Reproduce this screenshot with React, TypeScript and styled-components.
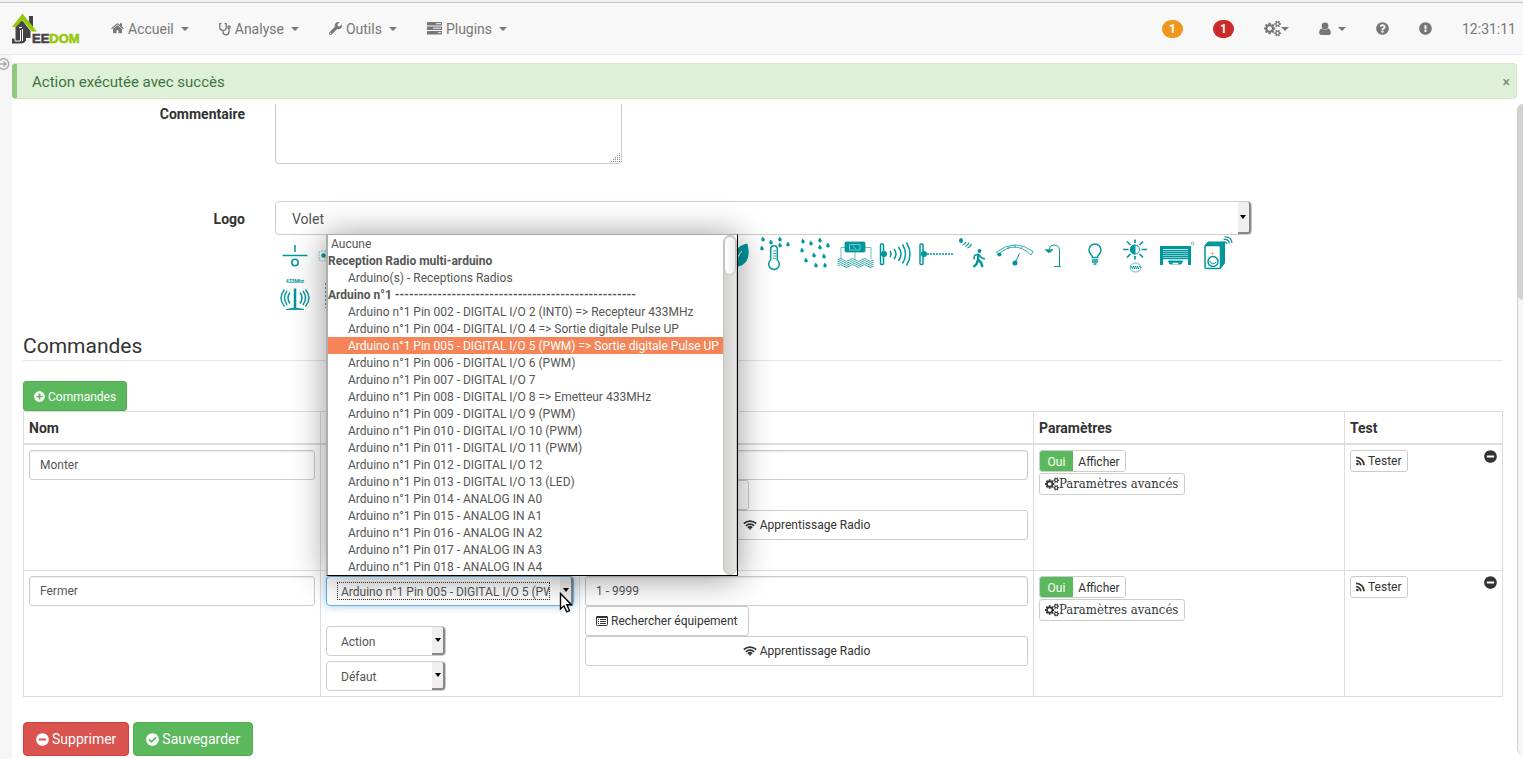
import React from 'react';
import styled, { createGlobalStyle, css } from 'styled-components';
import {
  FaCheckCircle,
  FaExclamationCircle,
  FaMinusCircle,
  FaPlusCircle,
  FaQuestionCircle,
  FaWrench,
} from 'react-icons/fa';

const TEAL = '#00979c';

const GlobalStyle = createGlobalStyle`
  *, *::before, *::after { box-sizing: border-box; }
  body {
    margin: 0;
    background: #fff;
    color: #333;
    font: 14px/20px Roboto, "Liberation Sans", sans-serif;
    overflow: hidden;
  }
  button, input, select, textarea { font-family: inherit; margin: 0; }
  svg { flex: none; }
`;

/* ---------- page frame ---------- */

const Page = styled.div`
  display: flex;
  flex-direction: column;
  min-height: 100vh;
`;

const TopEdge = styled.div`
  height: 3px;
  background: #f2f1f0;
  border-bottom: 1px solid #c6c4c2;
`;

const Navbar = styled.nav`
  display: flex;
  align-items: center;
  justify-content: space-between;
  height: 52px;
  padding: 0 7px 0 12px;
  background: #f8f8f8;
  border-bottom: 1px solid #e7e7e7;
`;

const NavGroup = styled.div`
  display: flex;
  align-items: center;
  gap: 30px;
`;

const NavLink = styled.a<{ $tight?: boolean }>`
  display: flex;
  align-items: center;
  gap: ${(p) => (p.$tight ? 0 : 4)}px;
  color: #777;
  font-size: 14px;
  text-decoration: none;
`;

const Caret = styled.span<{ $near?: boolean }>`
  margin-left: ${(p) => (p.$near ? 0 : 3)}px;
  border: 4px solid transparent;
  border-top-color: currentColor;
  border-bottom: 0;
`;

const Badge = styled.span<{ $color: string }>`
  width: 21px;
  height: 18px;
  border-radius: 9px;
  background: ${(p) => p.$color};
  color: #fff;
  font-size: 12px;
  font-weight: 700;
  line-height: 18px;
  text-align: center;
`;

const Clock = styled.time`
  color: #777;
  font-size: 14px;
`;

const LogoLink = styled.a`
  display: block;
  height: 32px;
`;

const Body = styled.div`
  display: flex;
  flex: 1;
`;

const SideStrip = styled.aside`
  width: 12px;
  flex: none;
  padding-top: 2px;
  background: #f5f5f5;
  overflow: hidden;
`;

const SideToggle = styled.button`
  display: flex;
  justify-content: flex-end;
  width: 10px;
  height: 14px;
  padding: 0;
  border: 0;
  background: none;
  overflow: hidden;
`;

const Main = styled.main`
  flex: 1;
  min-width: 0;
  padding-top: 8px;
`;

const Alert = styled.div`
  display: flex;
  align-items: center;
  justify-content: space-between;
  height: 36px;
  margin: 0 6px 5px 0;
  padding: 2px 6px 0 15px;
  border: 1px solid #d6e9c6;
  border-left: 5px solid #93c77f;
  border-radius: 4px;
  background: #dff0d8;
  color: #3c763d;
  font-size: 15px;
`;

const CloseButton = styled.button`
  padding: 0;
  border: 0;
  background: none;
  color: #72806f;
  font-size: 14px;
  line-height: 16px;
`;

const Scroller = styled.div`
  display: flex;
  justify-content: space-between;
`;

const Content = styled.div`
  flex: 1;
  min-width: 0;
  padding: 0 14px 0 11px;
`;

const ScrollTrack = styled.div`
  width: 6px;
  margin-bottom: 4px;
  border-left: 1px solid #cfcecd;
  border-radius: 6px 0 0 6px;
  background: #f5f5f4;
`;

const ScrollThumb = styled.div`
  height: 196px;
  border-radius: 6px 0 0 6px;
  background: #d3d2d1;
`;

/* ---------- form ---------- */

const FormRow = styled.div<{ $gap: number }>`
  display: flex;
  gap: 30px;
  margin-bottom: ${(p) => p.$gap}px;
`;

const Label = styled.label<{ $top?: number }>`
  width: 15%;
  padding-top: ${(p) => p.$top ?? 0}px;
  font-size: 14px;
  font-weight: 700;
  text-align: right;
`;

const CommentBox = styled.div`
  position: relative;
  width: 24%;
  max-width: 347px;
`;

const Comment = styled.textarea`
  display: block;
  width: 100%;
  height: 60px;
  padding: 6px 12px;
  border: 1px solid #ccc;
  border-top: 0;
  border-radius: 0 0 4px 4px;
  background: #fff;
  resize: none;
`;

const Grip = styled.svg`
  position: absolute;
  right: 0;
  bottom: 0;
  pointer-events: none;
`;

const LogoField = styled.div`
  width: 66%;
`;

const SelectBox = styled.div<{ $width: string; $height: number; $focus?: boolean }>`
  position: relative;
  width: ${(p) => p.$width};
  height: ${(p) => p.$height}px;
  border: 1px solid ${(p) => (p.$focus ? '#66afe9' : '#ccc')};
  border-radius: 4px;
  background: #fff;
  ${(p) => p.$focus && css`box-shadow: 0 0 8px rgba(102, 175, 233, 0.6);`}
`;

const Select = styled.select<{ $large?: boolean }>`
  display: block;
  width: 100%;
  height: 100%;
  padding: 2px 24px 0 ${(p) => (p.$large ? 16 : 14)}px;
  border: 0;
  outline: 0;
  appearance: none;
  background: none;
  color: #555;
  font-size: ${(p) => (p.$large ? 14 : 12)}px;
`;

const Arrow = styled.span`
  position: absolute;
  top: 0;
  right: 0;
  bottom: 0;
  display: flex;
  align-items: center;
  justify-content: center;
  width: 13px;
  border-right: 2px solid #888;
  border-bottom: 2px solid #888;
  border-radius: 0 3px 3px 0;
  background: #f0efed;
  pointer-events: none;

  &::after {
    content: '';
    border: 3px solid transparent;
    border-top: 4px solid #000;
    border-bottom: 0;
  }
`;

const FocusRing = styled.span`
  position: absolute;
  inset: 5px 23px 5px 10px;
  border: 1px dotted #333;
  pointer-events: none;
`;

const IconGrid = styled.div`
  display: flex;
  flex-wrap: wrap;
  height: 80px;
`;

/* ---------- commands ---------- */

const Legend = styled.h2`
  height: 46px;
  margin: 0 0 20px;
  padding-top: 18px;
  border-bottom: 1px solid #e5e5e5;
  font-size: 21px;
  font-weight: 400;
  line-height: 26px;
`;

const tones = {
  success: css`background: #5cb85c; border-color: #4cae4c; color: #fff;`,
  danger: css`background: #d9534f; border-color: #d43f3a; color: #fff;`,
  plain: css`background: #fff; border-color: #ccc; color: #333;`,
};

const sizes = {
  xs: css`height: 22px; padding: 1px 5px 0; font-size: 12px; border-radius: 3px;`,
  sm: css`height: 30px; padding: 1px 10px 0; font-size: 12px; border-radius: 3px;`,
  md: css`height: 34px; padding: 1px 12px 0; font-size: 14px; border-radius: 4px;`,
};

const Button = styled.button<{
  $tone: keyof typeof tones;
  $size: keyof typeof sizes;
  $block?: boolean;
  $serif?: boolean;
}>`
  display: flex;
  align-items: center;
  justify-content: center;
  gap: ${(p) => (p.$serif ? 0 : 3)}px;
  width: ${(p) => (p.$block ? '100%' : 'auto')};
  border: 1px solid;
  white-space: nowrap;
  ${(p) => tones[p.$tone]}
  ${(p) => sizes[p.$size]}
  ${(p) => p.$serif && css`
    padding: 0 6px 0 5px;
    font-family: "DejaVu Serif Condensed", "DejaVu Serif", serif;
    font-size: 13px;
    font-stretch: condensed;
  `}
`;

const Table = styled.table`
  width: 100%;
  table-layout: fixed;
  border-collapse: collapse;
`;

const Th = styled.th<{ $width?: string }>`
  width: ${(p) => p.$width ?? 'auto'};
  height: 32px;
  padding: 2px 5px 0;
  border: 1px solid #ddd;
  border-bottom-width: 2px;
  font-size: 14px;
  font-weight: 700;
  text-align: left;
`;

const Td = styled.td`
  height: 126px;
  padding: 5px;
  border: 1px solid #ddd;
  vertical-align: top;
`;

const TextInput = styled.input`
  display: block;
  width: 100%;
  height: 30px;
  padding: 0 10px;
  border: 1px solid #ccc;
  border-radius: 3px;
  background: #fff;
  box-shadow: inset 0 1px 1px rgba(0, 0, 0, 0.08);
  color: #555;
  font-size: 12px;
`;

const Stack = styled.div<{ $gap?: number }>`
  display: flex;
  flex-direction: column;
  align-items: flex-start;
  gap: ${(p) => p.$gap ?? 0}px;
`;

const Toggle = styled.div`
  display: flex;
  height: 22px;
  margin-bottom: 1px;
  border: 1px solid #ccc;
  border-radius: 3px;
  overflow: hidden;
`;

const ToggleOn = styled.button`
  width: 33px;
  padding: 2px 0 0;
  border: 0;
  background: #5cb85c;
  color: #fff;
  font-size: 12px;
`;

const ToggleName = styled.button`
  width: 52px;
  padding: 2px 0 0;
  border: 0;
  background: #fff;
  color: #333;
  font-size: 12px;
`;

const TestCell = styled.div`
  display: flex;
  align-items: flex-start;
  justify-content: space-between;
`;

const RemoveButton = styled.button`
  padding: 0;
  border: 0;
  background: none;
  color: #333;
  line-height: 0;
`;

const Actions = styled.div`
  display: flex;
  gap: 4px;
  margin-top: 25px;
  padding-bottom: 3px;
`;

/* ---------- drop-down list ---------- */

const Popup = styled.div`
  position: absolute;
  z-index: 5;
  bottom: calc(100% + 1px);
  left: -1px;
  display: flex;
  width: 412px;
  border: 1px solid #000;
  border-top-color: #aaa;
  border-left: 2px solid #adadad;
  background: #fff;
  box-shadow: 0 2px 32px rgba(0, 0, 0, 0.42);
`;

const OptionList = styled.ul`
  flex: 1;
  min-width: 0;
  margin: 0;
  padding: 0;
  list-style: none;
  overflow: hidden;
`;

const Option = styled.li<{ $kind: 'none' | 'group' | 'item'; $active?: boolean }>`
  height: 17px;
  padding-top: 1px;
  padding-left: ${(p) => ({ none: 3, group: 0, item: 20 })[p.$kind]}px;
  background: ${(p) => (p.$active ? '#f58559' : 'none')};
  color: ${(p) => (p.$active ? '#fff' : '#555')};
  font-size: 12px;
  font-weight: ${(p) => (p.$kind === 'group' ? 700 : 400)};
  line-height: 16px;
  white-space: nowrap;
`;

const PopupTrack = styled.div`
  width: 14px;
  border: 1px solid #c4c3c2;
  border-radius: 7px;
  background: linear-gradient(90deg, #d2d2d1, #e6e6e5);
`;

const PopupThumb = styled.div`
  height: 39px;
  border: 1px solid #c4c3c2;
  border-radius: 7px;
  background: linear-gradient(90deg, #fff, #ededec);
`;

const Pointer = styled.svg`
  position: absolute;
  z-index: 6;
  top: 15px;
  left: 232px;
`;

/* ---------- glyphs ---------- */

const GLYPHS = {
  home: 'M1472 992v480q0 26-19 45t-45 19h-384v-384h-256v384h-384q-26 0-45-19t-19-45v-480q0-1 .5-3t.5-3l575-474 575 474q1 2 1 6zm223-69l-62 74q-8 9-21 11h-3q-13 0-21-7l-692-577-692 577q-12 8-24 7-13-2-21-11l-62-74q-8-10-7-23.5t11-21.5l719-599q32-26 76-26t76 26l244 204v-195q0-14 9-23t23-9h192q14 0 23 9t9 23v408l219 182q10 8 11 21.5t-7 23.5z',
  cogs: 'M896 896q0-106-75-181t-181-75-181 75-75 181 75 181 181 75 181-75 75-181zm768 512q0-52-38-90t-90-38-90 38-38 90q0 53 37.5 90.5t90.5 37.5 90.5-37.5 37.5-90.5zm0-1024q0-52-38-90t-90-38-90 38-38 90q0 53 37.5 90.5t90.5 37.5 90.5-37.5 37.5-90.5zm-384 421v185q0 10-7 19.5t-16 10.5l-155 24q-11 35-32 76 34 48 90 115 7 11 7 20 0 12-7 19-23 30-82.5 89.5t-78.5 59.5q-11 0-21-7l-115-90q-37 19-77 31-11 108-23 155-7 24-30 24h-186q-11 0-20-7.5t-10-17.5l-23-153q-34-10-75-31l-118 89q-7 7-20 7-11 0-21-8-144-133-144-160 0-9 7-19 10-14 41-53t47-61q-23-44-35-82l-152-24q-10-1-17-9.5t-7-19.5v-185q0-10 7-19.5t16-10.5l155-24q11-35 32-76-34-48-90-115-7-11-7-20 0-12 7-20 22-30 82-89t79-59q11 0 21 7l115 90q34-18 77-32 11-108 23-154 7-24 30-24h186q11 0 20 7.5t10 17.5l23 153q34 10 75 31l118-89q8-7 20-7 11 0 21 8 144 133 144 160 0 8-7 19-12 16-42 54t-45 60q23 48 34 82l152 23q10 2 17 10.5t7 19.5zm640 533v140q0 16-149 31-12 27-30 52 51 113 51 138 0 4-4 7-122 71-124 71-8 0-46-47t-52-68q-20 2-30 2t-30-2q-14 21-52 68t-46 47q-2 0-124-71-4-3-4-7 0-25 51-138-18-25-30-52-149-15-149-31v-140q0-16 149-31 13-29 30-52-51-113-51-138 0-4 4-7 4-2 35-20t59-34 30-16q8 0 46 46.5t52 67.5q20-2 30-2t30 2q51-71 92-112l6-2q4 0 124 70 4 3 4 7 0 25-51 138 17 23 30 52 149 15 149 31zm0-1024v140q0 16-149 31-12 27-30 52 51 113 51 138 0 4-4 7-122 71-124 71-8 0-46-47t-52-68q-20 2-30 2t-30-2q-14 21-52 68t-46 47q-2 0-124-71-4-3-4-7 0-25 51-138-18-25-30-52-149-15-149-31v-140q0-16 149-31 13-29 30-52-51-113-51-138 0-4 4-7 4-2 35-20t59-34 30-16q8 0 46 46.5t52 67.5q20-2 30-2t30 2q51-71 92-112l6-2q4 0 124 70 4 3 4 7 0 25-51 138 17 23 30 52 149 15 149 31z',
};

const HomeIcon = () => (
  <svg width="13" height="15" viewBox="64 100 1664 1664" fill="currentColor" aria-hidden="true">
    <path d={GLYPHS.home} />
  </svg>
);

const CogsIcon = ({ size }: { size: number }) => (
  <svg width={size} height={size} viewBox="0 0 1920 1792" fill="currentColor" aria-hidden="true">
    <path d={GLYPHS.cogs} />
  </svg>
);

const StethoscopeIcon = () => (
  <svg width="12" height="14" viewBox="0 0 12 14" fill="none" stroke="currentColor" strokeWidth="1.3" aria-hidden="true">
    <path d="M2.4 1.6H.8v3.6a3.2 3.2 0 0 0 6.4 0V1.6H5.6M4 8.4v1.4a3 3 0 0 0 6 0V6.6" />
    <circle cx="10" cy="5.2" r="1.2" />
  </svg>
);

const TasksIcon = () => (
  <svg width="15" height="13" viewBox="0 0 15 13" aria-hidden="true">
    <g fill="currentColor">
      <rect y="0" width="15" height="3.500" rx=".5" />
      <rect y="4.500" width="15" height="3.500" rx=".5" />
      <rect y="9" width="15" height="3.500" rx=".5" />
    </g>
    <path d="M9 1.700h5M6 6.200h8M11 10.700h3" stroke="#f8f8f8" strokeWidth="1" />
  </svg>
);

const UserIcon = () => (
  <svg width="12" height="14" viewBox="0 0 12 14" fill="currentColor" aria-hidden="true">
    <circle cx="6" cy="4" r="3.400" />
    <path d="M3 6.400C.8 6.600.2 8.800.2 11c0 1.300.9 2 2 2h7.600c1.100 0 2-.7 2-2 0-2.200-.6-4.400-2.800-4.600a4.200 4.200 0 0 1-6 0z" />
  </svg>
);

const ListIcon = () => (
  <svg width="12" height="12" viewBox="0 0 12 12" aria-hidden="true">
    <rect x=".5" y="1.5" width="11" height="9" rx="1" fill="none" stroke="currentColor" />
    <path d="M.5 2h11" stroke="currentColor" strokeWidth="2" />
    <path d="M2 4.500h1M4 4.500h6M2 6.500h1M4 6.500h6M2 8.500h1M4 8.500h6" stroke="currentColor" />
  </svg>
);

const WifiIcon = () => (
  <svg width="14" height="12" viewBox="0 0 14 12" fill="none" stroke="currentColor" strokeWidth="1.700" aria-hidden="true">
    <path d="M.8 4.600a8.800 8.800 0 0 1 12.400 0M2.900 6.800a5.800 5.800 0 0 1 8.200 0M4.900 8.800a3 3 0 0 1 4.200 0" />
    <path d="M5.800 9.700a1.700 1.700 0 0 1 2.400 0L7 11z" fill="currentColor" stroke="none" />
  </svg>
);

const RssIcon = () => (
  <svg width="9" height="10" viewBox="0 0 9 10" fill="none" stroke="currentColor" strokeWidth="1.700" aria-hidden="true">
    <path d="M.2 1.400a7.800 7.800 0 0 1 7.800 7.800M.2 4.700a4.500 4.500 0 0 1 4.500 4.500" />
    <circle cx="1.400" cy="8" r="1.300" fill="currentColor" stroke="none" />
  </svg>
);

const JeedomLogo = () => (
  <svg width="69" height="32" viewBox="0 0 69 32" role="img" aria-label="Jeedom">
    <path d="M17 3h4v12h-4z" fill="#434247" />
    <path d="M3 13.500 10 7l8.500 11v7H14v3H9V16z" fill="#434247" />
    <path d="M3.500 13h10v13c0 4-2.500 4.500-5.500 4.500H0V25.500h3.500z" fill="#434247" />
    <path d="M3 25v3h5.500v-11M10.500 28V16" fill="none" stroke="#f8f8f8" strokeWidth="1" />
    <path d="M0 14 10.500.5 25 18.500h-5.500l-9-11.500L4 14z" fill="#96c80c" />
    <path d="M7 14.500h3" stroke="#f8f8f8" strokeWidth="1.200" />
    <text x="20" y="30" fontFamily="'Liberation Sans', Arial, sans-serif" fontWeight="700" fontSize="13" strokeWidth=".6">
      <tspan fill="#434247" stroke="#434247">EE</tspan>
      <tspan fill="#96c80c" stroke="#96c80c">DOM</tspan>
    </text>
  </svg>
);

const Drops = ({ at }: { at: number[][] }) => (
  <g fill={TEAL} stroke="none">
    {at.map(([x, y]) => (
      <path key={`${x}-${y}`} d={`M${x - 0.5} ${y - 2.4}c1.200 1.500 2.300 2.300 2.300 3.200a1.700 1.700 0 0 1-3.500 0c0-1 .8-1.500 1.200-3.200z`} />
    ))}
  </g>
);

const DEVICES: Record<string, React.ReactNode> = {
  switch: (
    <g strokeWidth="1.500">
      <path d="M20 10v7M7.500 20.500h25" />
      <circle cx="20" cy="27.500" r="3.200" />
    </g>
  ),
  camera: (
    <g>
      <path d="M8 15.500 4 17v8l4 1.500M10 15.500h14v11H10z" strokeWidth=".5" strokeDasharray="2 1" />
      <circle cx="8.500" cy="20.500" r="1.800" fill={TEAL} />
    </g>
  ),
  leaf: (
    <g>
      <path d="M32 9c-10 3-16 8-13 22 10 1 17-6 13-22z" fill={TEAL} />
      <path d="M27 16c-3 3-5 7-6 13" stroke="#fff" />
    </g>
  ),
  thermometer: (
    <g>
      <path d="M15.700 25V14a3.300 3.300 0 0 1 6.600 0v11a5.300 5.300 0 1 1-6.600 0z" strokeWidth="1.500" />
      <path d="M18 16h3M18 18.500h3M18 21h3M18 23.500h3" strokeWidth=".8" />
      <Drops at={[[8, 4], [16, 7], [25, 4], [25, 10], [33, 9], [7, 13]]} />
    </g>
  ),
  rain: (
    <Drops at={[[8, 6], [16, 8], [25, 5], [33, 10], [7, 15], [25, 12], [19, 20], [29, 21], [11, 25], [21, 30], [30, 30]]} />
  ),
  water: (
    <g strokeWidth=".8">
      <rect x="10" y="7" width="20" height="10" rx="1" fill={TEAL} />
      <path d="M14.500 9.500h10.500v5.500H14.500zM18 11l3 3" stroke="#a5dcdd" strokeWidth=".7" />
      <path d="M10 12.500H6V24M30 12.500h6V24M20 17v8" strokeWidth=".6" />
      {[25, 27, 29, 31].map((y) => (
        <path key={y} d={`M2.500 ${y}q3-3 6 0t6 0 6 0 6 0 6 0 6 0`} />
      ))}
    </g>
  ),
  motion: (
    <g strokeWidth="1.500">
      <rect x="5.500" y="9" width="3" height="20.500" rx="1" />
      <circle cx="9" cy="19" r="2.300" fill={TEAL} />
      <path d="M15 16q2 3 0 6M19 14q4 5 0 10M23.500 12q5 7 0 14M27.500 9.500q6 9.500 0 19M31.500 7.500q7 11.500 0 23" />
    </g>
  ),
  beam: (
    <g strokeWidth="1.500">
      <rect x="5" y="9" width="3" height="20.500" rx="1" />
      <circle cx="9" cy="19" r="2.300" fill={TEAL} />
      <path d="M12 19h26" strokeDasharray="2 1" />
    </g>
  ),
  presence: (
    <g>
      <ellipse cx="6" cy="5.500" rx="2" ry="2.500" fill={TEAL} stroke="none" />
      <path d="M7.500 10q2.500-.5 3.500-3M10 11.500q3-1 4-4M12.500 13q3-1 4-4" strokeWidth="1.200" />
      <circle cx="24.500" cy="16" r="2" fill={TEAL} stroke="none" />
      <path d="m23.500 19-4 1.500-.5 4M24 20l3 3 3 1" strokeWidth="1.500" />
      <path d="m23.500 19-.5 6 3 2.500 1.500 4.500M23 25l-1.500 4-3 3" strokeWidth="2.400" />
    </g>
  ),
  gauge: (
    <g>
      <path d="M3 20q16-16 33 0l2-3.500Q20 3 1.500 17zM13 12l.5 2M20 10v3M27 12l-.5 2" strokeWidth=".8" />
      <circle cx="4.500" cy="19.500" r="2" fill={TEAL} stroke="none" />
      <circle cx="20" cy="28" r="2.500" fill={TEAL} stroke="none" />
      <path d="m20 28 4.500-9.500" />
    </g>
  ),
  faucet: (
    <g>
      <path d="M24.500 31V15q-.5-5-5.500-5-4 0-5 4M19 31.500h7" />
      <path d="M10 14.500h8l-3 3h-2z" fill={TEAL} strokeWidth=".5" />
    </g>
  ),
  bulb: (
    <g strokeWidth="1.500">
      <path d="M17.500 22.500c0-3-3.500-3-3.500-7.500a6 6 0 0 1 12 0c0 4.500-3.500 4.500-3.500 7.500z" />
      <path d="M17 25h6M17 27h6M18.500 29h3" />
    </g>
  ),
  sun: (
    <g>
      <circle cx="20" cy="14.500" r="4.500" />
      <path d="M20 10a4.500 4.500 0 0 0 0 9z" fill={TEAL} />
      <path d="M20 8V4.500M20 21v3.500M13.500 14.500H8M26.500 14.500H32M15.500 10 12 6.500M24.500 10 28 6.500M15.500 19 12 22.500M24.500 19l3.500 3.500" strokeWidth="1.700" />
      <ellipse cx="20.500" cy="32.500" rx="5.500" ry="4.500" strokeWidth=".6" />
      <path d="M15.500 32.500l1-1.500 1 3 1-3 1 3 1-3 1 3 1-3 1 3 1-3 1 1.500" strokeWidth=".8" />
    </g>
  ),
  garage: (
    <g>
      <path d="M6.500 30V12.500h28V30" strokeWidth="3" />
      <path d="M8 15.500h25M8 17.500h25M8 19.500h25M8 21.500h25M8 23.500h25" strokeWidth="1.300" />
      <path d="M13.500 26h14l-1.500 3H15z" fill={TEAL} />
      <path d="M17.500 28.500h6" stroke="#fff" strokeWidth="1.500" />
      <circle cx="37.500" cy="8.500" r="1.300" strokeWidth=".6" />
    </g>
  ),
  speaker: (
    <g>
      <path d="M10 10.500 13 7h16.500v21L25.500 33.500z" fill={TEAL} />
      <rect x="10" y="10.500" width="15.500" height="23" rx="1.500" fill="#fff" strokeWidth="1.500" />
      <circle cx="17.500" cy="18.500" r=".8" fill="#e33" stroke="none" />
      <circle cx="18" cy="26.500" r="5" strokeWidth="1.500" />
      <path d="M14.500 26q3 5 6.500 1" />
      <path d="M28.500 7q3-.5 3.500 2M28.500 4.500q5.500-.5 6 4M29.500 2q7-.5 7.500 6" strokeWidth="1.200" />
    </g>
  ),
  radio: (
    <g>
      <text x="20" y="8" fontSize="5" fontWeight="700" textAnchor="middle" fill={TEAL} stroke="none">433Mhz</text>
      <path d="M20 13.500v20" strokeWidth="2.500" />
      <path d="M11 34.500q9-3 18 0z" fill={TEAL} strokeWidth=".8" />
      <path d="M15 17.500q-4 5 0 11M12 16q-5 6.500 0 14M9.500 14.500q-7 8.500 0 17M25 17.500q4 5 0 11M28 16q5 6.500 0 14M30.500 14.500q7 8.500 0 17" strokeWidth="1.400" />
    </g>
  ),
  chip: <path d="M11 8v25" strokeWidth="1.500" strokeDasharray="2 2" />,
};

const GALLERY = [
  'switch', 'camera', 'bulb', 'faucet', 'bulb', 'faucet', 'bulb', 'faucet', 'bulb', 'faucet', 'bulb', 'leaf',
  'thermometer', 'rain', 'water', 'motion', 'beam', 'presence', 'gauge', 'faucet', 'bulb', 'sun', 'garage', 'speaker',
  'radio', 'chip',
];

const DeviceIcon = ({ name }: { name: string }) => (
  <svg width="40" height="40" viewBox="0 0 40 40" fill="none" stroke={TEAL} aria-hidden="true">
    {DEVICES[name]}
  </svg>
);

/* ---------- data ---------- */

const PIN5 = 'Arduino n°1 Pin 005 - DIGITAL I/O 5 (PWM) => Sortie digitale Pulse UP';
const PIN4 = 'Arduino n°1 Pin 004 - DIGITAL I/O 4 => Sortie digitale Pulse UP';

const OPTIONS: { kind: 'none' | 'group' | 'item'; text: string }[] = [
  { kind: 'none', text: 'Aucune' },
  { kind: 'group', text: 'Reception Radio multi-arduino' },
  { kind: 'item', text: 'Arduino(s) - Receptions Radios' },
  { kind: 'group', text: `Arduino n°1 ${'-'.repeat(51)}` },
  { kind: 'item', text: 'Arduino n°1 Pin 002 - DIGITAL I/O 2 (INT0) => Recepteur 433MHz' },
  { kind: 'item', text: PIN4 },
  { kind: 'item', text: PIN5 },
  { kind: 'item', text: 'Arduino n°1 Pin 006 - DIGITAL I/O 6 (PWM)' },
  { kind: 'item', text: 'Arduino n°1 Pin 007 - DIGITAL I/O 7' },
  { kind: 'item', text: 'Arduino n°1 Pin 008 - DIGITAL I/O 8 => Emetteur 433MHz' },
  { kind: 'item', text: 'Arduino n°1 Pin 009 - DIGITAL I/O 9 (PWM)' },
  { kind: 'item', text: 'Arduino n°1 Pin 010 - DIGITAL I/O 10 (PWM)' },
  { kind: 'item', text: 'Arduino n°1 Pin 011 - DIGITAL I/O 11 (PWM)' },
  { kind: 'item', text: 'Arduino n°1 Pin 012 - DIGITAL I/O 12' },
  { kind: 'item', text: 'Arduino n°1 Pin 013 - DIGITAL I/O 13 (LED)' },
  { kind: 'item', text: 'Arduino n°1 Pin 014 - ANALOG IN A0' },
  { kind: 'item', text: 'Arduino n°1 Pin 015 - ANALOG IN A1' },
  { kind: 'item', text: 'Arduino n°1 Pin 016 - ANALOG IN A2' },
  { kind: 'item', text: 'Arduino n°1 Pin 017 - ANALOG IN A3' },
  { kind: 'item', text: 'Arduino n°1 Pin 018 - ANALOG IN A4' },
];

const SmallSelect = ({ label, value }: { label: string; value: string }) => (
  <SelectBox $width="120px" $height={30}>
    <Select aria-label={label}>
      <option>{value}</option>
    </Select>
    <Arrow />
  </SelectBox>
);

const PinSelect = ({ pin, open }: { pin: string; open?: boolean }) => (
  <SelectBox $width="100%" $height={30} $focus={open}>
    <Select aria-label="Pin">
      <option>{pin}</option>
    </Select>
    <Arrow />
    {open && (
      <>
        <FocusRing />
        <Popup>
          <OptionList role="listbox" aria-label="Pins">
            {OPTIONS.map((o) => (
              <Option key={o.text} role="option" aria-selected={o.text === pin} $kind={o.kind} $active={o.text === pin}>
                {o.text}
              </Option>
            ))}
          </OptionList>
          <PopupTrack>
            <PopupThumb />
          </PopupTrack>
        </Popup>
        <Pointer width="14" height="22" viewBox="0 0 14 22" aria-hidden="true">
          <path d="M1.500 1.500v15.500l3.500-3.200 2.700 6 2.800-1.200-2.700-5.800h4.700z" fill="#fff" stroke="#000" strokeWidth="1.400" />
        </Pointer>
      </>
    )}
  </SelectBox>
);

const CommandRow = ({ name, pin, open }: { name: string; pin: string; open?: boolean }) => (
  <tr>
    <Td>
      <TextInput aria-label="Nom" defaultValue={name} />
    </Td>
    <Td>
      <Stack $gap={20}>
        <PinSelect pin={pin} open={open} />
        <Stack $gap={5}>
          <SmallSelect label="Type" value="Action" />
          <SmallSelect label="Sous-type" value="Défaut" />
        </Stack>
      </Stack>
    </Td>
    <Td>
      <Stack>
        <TextInput aria-label="Valeur" defaultValue="1 - 9999" />
        <Button $tone="plain" $size="sm"><ListIcon />Rechercher équipement</Button>
        <Button $tone="plain" $size="sm" $block><WifiIcon />Apprentissage Radio</Button>
      </Stack>
    </Td>
    <Td>
      <Stack>
        <Toggle>
          <ToggleOn>Oui</ToggleOn>
          <ToggleName>Afficher</ToggleName>
        </Toggle>
        <Button $tone="plain" $size="xs" $serif><CogsIcon size={14} />Paramètres avancés</Button>
      </Stack>
    </Td>
    <Td>
      <TestCell>
        <Button $tone="plain" $size="xs"><RssIcon />Tester</Button>
        <RemoveButton aria-label="Supprimer la commande"><FaMinusCircle size={13} /></RemoveButton>
      </TestCell>
    </Td>
  </tr>
);

export default function App() {
  return (
    <Page>
      <GlobalStyle />
      <TopEdge />
      <Navbar>
        <NavGroup>
          <LogoLink href="#"><JeedomLogo /></LogoLink>
          <NavLink href="#"><HomeIcon />Accueil<Caret /></NavLink>
          <NavLink href="#"><StethoscopeIcon />Analyse<Caret /></NavLink>
          <NavLink href="#"><FaWrench size={13} />Outils<Caret /></NavLink>
          <NavLink href="#"><TasksIcon />Plugins<Caret /></NavLink>
        </NavGroup>
        <NavGroup>
          <Badge $color="#ee971c">1</Badge>
          <Badge $color="#cb2a2a">1</Badge>
          <NavLink href="#" $tight aria-label="Configuration"><CogsIcon size={17} /><Caret $near /></NavLink>
          <NavLink href="#" aria-label="Utilisateur"><UserIcon /><Caret /></NavLink>
          <NavLink href="#" aria-label="Aide"><FaQuestionCircle size={13} /></NavLink>
          <NavLink href="#" aria-label="Signaler"><FaExclamationCircle size={13} /></NavLink>
          <Clock>12:31:11</Clock>
        </NavGroup>
      </Navbar>
      <Body>
        <SideStrip>
          <SideToggle aria-label="Ouvrir le menu">
            <svg width="13" height="14" viewBox="0 0 13 14" fill="none" stroke="#aaa" strokeWidth="1.500">
              <circle cx="6.500" cy="7" r="5.200" />
              <path d="M3 7h6M6.500 4.500 9 7 6.500 9.500" />
            </svg>
          </SideToggle>
        </SideStrip>
        <Main>
          <Alert role="alert">
            <span>Action exécutée avec succès</span>
            <CloseButton aria-label="Fermer">×</CloseButton>
          </Alert>
          <Scroller>
            <Content>
              <FormRow $gap={37}>
                <Label htmlFor="comment">Commentaire</Label>
                <CommentField />
              </FormRow>
              <FormRow $gap={0}>
                <Label htmlFor="logo" $top={8}>Logo</Label>
                <LogoField>
                  <SelectBox $width="100%" $height={34}>
                    <Select id="logo" $large>
                      <option>Volet</option>
                    </Select>
                    <Arrow />
                  </SelectBox>
                  <IconGrid>
                    {GALLERY.map((name, i) => (
                      <DeviceIcon key={i} name={name} />
                    ))}
                  </IconGrid>
                </LogoField>
              </FormRow>
              <Legend>Commandes</Legend>
              <Button $tone="success" $size="sm"><FaPlusCircle size={11} />Commandes</Button>
              <Table>
                <thead>
                  <tr>
                    <Th $width="297px">Nom</Th>
                    <Th $width="259px" aria-label="Pin" />
                    <Th aria-label="Valeur" />
                    <Th $width="311px">Paramètres</Th>
                    <Th $width="158px">Test</Th>
                  </tr>
                </thead>
                <tbody>
                  <CommandRow name="Monter" pin={PIN4} />
                  <CommandRow name="Fermer" pin={PIN5} open />
                </tbody>
              </Table>
              <Actions>
                <Button $tone="danger" $size="md"><FaMinusCircle size={13} />Supprimer</Button>
                <Button $tone="success" $size="md"><FaCheckCircle size={13} />Sauvegarder</Button>
              </Actions>
            </Content>
            <ScrollTrack>
              <ScrollThumb />
            </ScrollTrack>
          </Scroller>
        </Main>
      </Body>
    </Page>
  );
}

function CommentField() {
  const dots = [[9, 1], [9, 3], [7, 3], [9, 5], [7, 5], [5, 5], [9, 7], [7, 7], [5, 7], [3, 7], [9, 9], [7, 9], [5, 9], [3, 9], [1, 9]];
  return (
    <CommentBox>
      <Comment id="comment" />
      <Grip width="12" height="12" viewBox="0 0 12 12" fill="#888" aria-hidden="true">
        {dots.map(([x, y]) => (
          <rect key={`${x}-${y}`} x={x} y={y} width="1" height="1" />
        ))}
      </Grip>
    </CommentBox>
  );
}
